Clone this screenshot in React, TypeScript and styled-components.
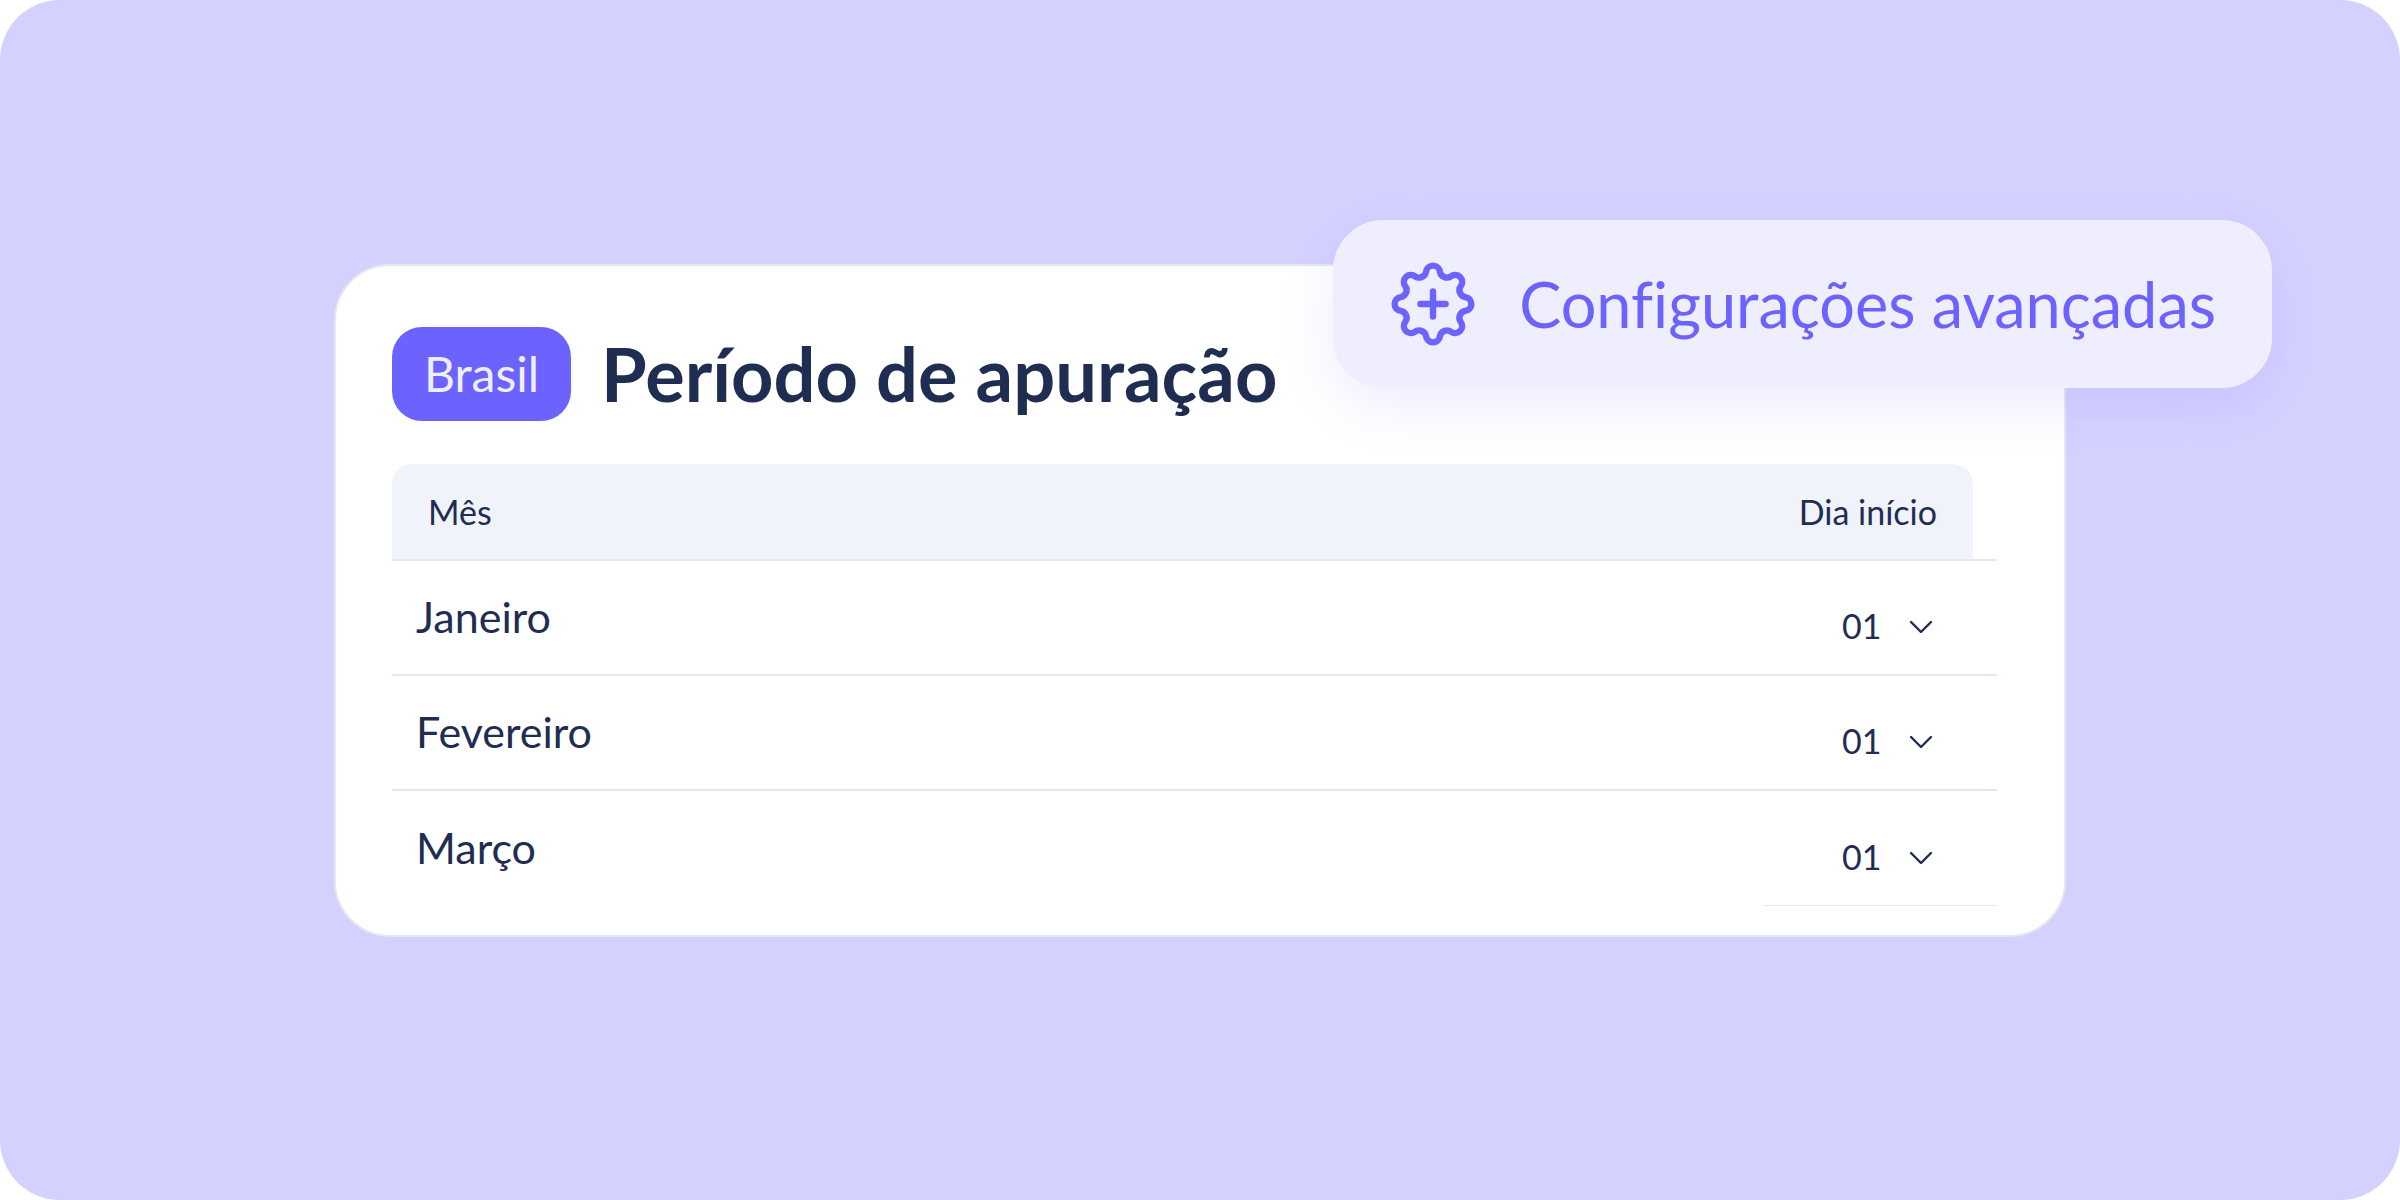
import React from "react";
import styled, { createGlobalStyle } from "styled-components";

const color = {
  canvas: "#d5d1ff",
  card: "#ffffff",
  line: "#e2e8f0",
  head: "#f0f3f9",
  ink: "#1f2d52",
  brand: "#6c63ff",
  soft: "#efeeff",
};

const GlobalStyle = createGlobalStyle`
  *, *::before, *::after { box-sizing: border-box; }
  body {
    margin: 0;
    background: #ffffff;
    color: ${color.ink};
    font-family: Lato, "Liberation Sans", sans-serif;
    font-variant-ligatures: none;
  }
`;

const Stage = styled.main`
  display: flex;
  align-items: center;
  justify-content: center;
  min-height: 100vh;
  padding: 48px 334px;
  border-radius: 60px;
  background: ${color.canvas};
`;

const Card = styled.section`
  position: relative;
  flex: 1;
  min-width: 0;
  padding: 61px 67px 29px 56px;
  border: 2px solid ${color.line};
  border-radius: 56px;
  background: ${color.card};
`;

const CardHeader = styled.header`
  display: flex;
  align-items: center;
  gap: 30px;
  margin-bottom: 43px;
`;

const Badge = styled.span`
  padding: 0 32px;
  border-radius: 30px;
  background: ${color.brand};
  color: ${color.soft};
  font-size: 48px;
  line-height: 94px;
`;

const Title = styled.h1`
  margin: 0;
  font-size: 74px;
  font-weight: 700;
  line-height: 84px;
  white-space: nowrap;
`;

const AdvancedButton = styled.button`
  position: absolute;
  top: -46px;
  right: -208px;
  display: flex;
  align-items: center;
  gap: 44px;
  height: 168px;
  padding: 0 56px 0 58px;
  border: 0;
  border-radius: 50px;
  background: ${color.soft};
  box-shadow: 0 16px 56px rgba(108, 99, 255, 0.12);
  color: ${color.brand};
  font-family: inherit;
  font-size: 63px;
  font-variant-ligatures: none;
  line-height: 72px;
  white-space: nowrap;
  cursor: pointer;
`;

const Table = styled.table`
  width: 100%;
  border-collapse: separate;
  border-spacing: 0;
  table-layout: fixed;
`;

const MonthColumn = styled.col`
  width: auto;
`;

const DayColumn = styled.col`
  width: 233px;
`;

const HeadCell = styled.th<{ $last?: boolean }>`
  padding: 0 ${(p) => (p.$last ? 24 : 0)}px 0 0;
  border-bottom: 2px solid ${color.line};
  font-size: 34px;
  font-weight: 400;
  line-height: 95px;
  text-align: ${(p) => (p.$last ? "right" : "left")};
  white-space: nowrap;
`;

const HeadFill = styled.div<{ $last?: boolean }>`
  padding: ${(p) => (p.$last ? "0 36px 0 0" : "0 0 0 36px")};
  border-radius: ${(p) => (p.$last ? "0 20px 0 0" : "20px 0 0 0")};
  background: ${color.head};
`;

const Row = styled.tr`
  height: 115px;
`;

const MonthCell = styled.th<{ $lastRow: boolean }>`
  padding: 0 24px;
  border-bottom: ${(p) => (p.$lastRow ? "0" : `2px solid ${color.line}`)};
  font-size: 43px;
  font-weight: 400;
  line-height: 50px;
  text-align: left;
`;

const DayCell = styled.td<{ $lastRow: boolean }>`
  padding: 18px 60px 0 0;
  border-bottom: ${(p) => (p.$lastRow ? 1 : 2)}px solid ${color.line};
`;

const SelectBox = styled.div`
  display: grid;
  align-items: center;
  justify-items: end;
  justify-content: end;
  grid-template-areas: "field";
`;

const DaySelect = styled.select`
  grid-area: field;
  padding: 0 55px 0 0;
  border: 0;
  appearance: none;
  background: transparent;
  color: inherit;
  font-family: inherit;
  font-size: 34px;
  line-height: 42px;
  cursor: pointer;
`;

const Chevron = styled.svg`
  grid-area: field;
  width: 32px;
  height: 32px;
  pointer-events: none;
`;

const LOBES = 8;
const LOBE_RADIUS = 7;
const JOIN_RADIUS = 33;
const JOIN_ANGLE = 12.14;

function joinPoint(degrees: number) {
  const a = ((degrees - 90) * Math.PI) / 180;
  return `${(JOIN_RADIUS * Math.cos(a)).toFixed(2)} ${(JOIN_RADIUS * Math.sin(a)).toFixed(2)}`;
}

const scallop =
  `M${joinPoint(-JOIN_ANGLE)}` +
  Array.from({ length: LOBES }, (_, i) => {
    const angle = (360 / LOBES) * i;
    const next = angle + 360 / LOBES;
    const arc = `A${LOBE_RADIUS} ${LOBE_RADIUS} 0 0`;
    return `${arc} 1 ${joinPoint(angle + JOIN_ANGLE)}${arc} 0 ${joinPoint(next - JOIN_ANGLE)}`;
  }).join("") +
  "Z";

function GearPlusIcon() {
  return (
    <svg
      width="84"
      height="84"
      viewBox="-42 -42 84 84"
      fill="none"
      stroke="currentColor"
      strokeWidth="6.4"
      strokeLinecap="round"
      strokeLinejoin="round"
      aria-hidden="true"
    >
      <path d={scallop} />
      <path d="M-12.6 0H12.6M0-12.6V12.6" />
    </svg>
  );
}

const months = ["Janeiro", "Fevereiro", "Março"];
const days = Array.from({ length: 31 }, (_, i) => String(i + 1).padStart(2, "0"));

export default function App() {
  return (
    <>
      <GlobalStyle />
      <Stage>
        <Card>
          <CardHeader>
            <Badge>Brasil</Badge>
            <Title>Período de apuração</Title>
          </CardHeader>
          <Table>
            <colgroup>
              <MonthColumn />
              <DayColumn />
            </colgroup>
            <thead>
              <tr>
                <HeadCell scope="col">
                  <HeadFill>Mês</HeadFill>
                </HeadCell>
                <HeadCell scope="col" $last>
                  <HeadFill $last>Dia início</HeadFill>
                </HeadCell>
              </tr>
            </thead>
            <tbody>
              {months.map((month, i) => {
                const lastRow = i === months.length - 1;
                return (
                  <Row key={month}>
                    <MonthCell scope="row" id={`mes-${i}`} $lastRow={lastRow}>
                      {month}
                    </MonthCell>
                    <DayCell $lastRow={lastRow}>
                      <SelectBox>
                        <DaySelect aria-labelledby={`mes-${i}`} defaultValue="01">
                          {days.map((day) => (
                            <option key={day}>{day}</option>
                          ))}
                        </DaySelect>
                        <Chevron viewBox="0 0 32 32" aria-hidden="true">
                          <path
                            d="M6 12L16 22L26 12"
                            fill="none"
                            stroke="currentColor"
                            strokeWidth="2.4"
                            strokeLinecap="round"
                            strokeLinejoin="round"
                          />
                        </Chevron>
                      </SelectBox>
                    </DayCell>
                  </Row>
                );
              })}
            </tbody>
          </Table>
          <AdvancedButton type="button">
            <GearPlusIcon />
            Configurações avançadas
          </AdvancedButton>
        </Card>
      </Stage>
    </>
  );
}
